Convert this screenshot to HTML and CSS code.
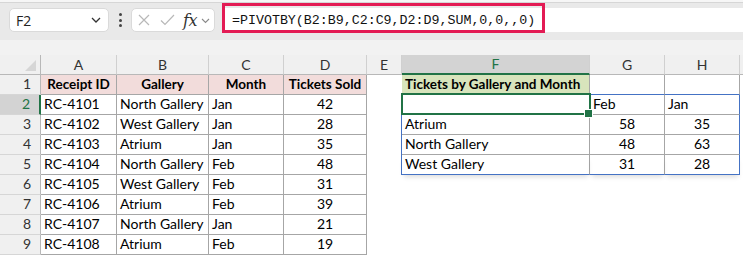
FILE: index.html
```html
<!doctype html>
<html>
  <head>
    <title>PIVOTBY - Tickets by Gallery</title>
    <link rel="stylesheet" href="styles.css">
  </head>
  <body>
    <div class="top-line"></div>

    <div class="formula-bar">
      <div class="name-box">
        <span class="name-text">F2</span>
        <svg class="chevron" width="10" height="6" viewBox="0 0 10 6">
          <polyline points="1,1 5,5 9,1" fill="none" stroke="#333" stroke-width="1.3" />
        </svg>
      </div>

      <div class="dots">
        <span></span>
        <span></span>
        <span></span>
      </div>

      <div class="fn-box">
        <svg width="12" height="12" viewBox="0 0 12 12">
          <path d="M1 1 L11 11 M11 1 L1 11" stroke="#b8b8b8" stroke-width="1.2" fill="none" />
        </svg>
        <svg class="check" width="15" height="12" viewBox="0 0 15 12">
          <polyline points="1,6.5 5,10.5 14,1" fill="none" stroke="#b8b8b8" stroke-width="1.2" />
        </svg>
        <span class="fx">fx</span>
        <svg class="fx-chevron" width="9" height="6" viewBox="0 0 9 6">
          <polyline points="1,1 4.5,4.5 8,1" fill="none" stroke="#8a8a8a" stroke-width="1.1" />
        </svg>
      </div>

      <div class="formula-input">
        <div class="formula-highlight"></div>
        <span class="formula-text">=PIVOTBY(B2:B9,C2:C9,D2:D9,SUM,0,0,,0)</span>
      </div>
    </div>

    <div class="band"></div>

    <table class="sheet">
      <colgroup>
        <col class="w-hdr">
        <col class="w-a">
        <col class="w-b">
        <col class="w-c">
        <col class="w-d">
        <col class="w-e">
        <col class="w-f">
        <col class="w-g">
        <col class="w-h">
        <col class="w-i">
      </colgroup>
      <tr class="col-headers">
        <th class="corner"><span class="corner-mark"></span></th>
        <th>A</th>
        <th>B</th>
        <th>C</th>
        <th>D</th>
        <th>E</th>
        <th class="active">F</th>
        <th>G</th>
        <th>H</th>
        <th class="last"></th>
      </tr>
      <tr>
        <td class="row-hdr">1</td>
        <td class="hd">Receipt ID</td>
        <td class="hd">Gallery</td>
        <td class="hd">Month</td>
        <td class="hd">Tickets Sold</td>
        <td class="e"></td>
        <td class="title">Tickets by Gallery and Month</td>
        <td class="pv-top-edge"></td>
        <td class="pv-top-edge"></td>
        <td></td>
      </tr>
      <tr>
        <td class="row-hdr active">2</td>
        <td class="dt">RC-4101</td>
        <td class="dt">North Gallery</td>
        <td class="dt">Jan</td>
        <td class="dt num">42</td>
        <td class="e pv-left"></td>
        <td class="pv selected"></td>
        <td class="pv">Feb</td>
        <td class="pv pv-right">Jan</td>
        <td></td>
      </tr>
      <tr>
        <td class="row-hdr">3</td>
        <td class="dt">RC-4102</td>
        <td class="dt">West Gallery</td>
        <td class="dt">Jan</td>
        <td class="dt num">28</td>
        <td class="e pv-left"></td>
        <td class="pv">Atrium</td>
        <td class="pv num">58</td>
        <td class="pv pv-right num">35</td>
        <td></td>
      </tr>
      <tr>
        <td class="row-hdr">4</td>
        <td class="dt">RC-4103</td>
        <td class="dt">Atrium</td>
        <td class="dt">Jan</td>
        <td class="dt num">35</td>
        <td class="e pv-left"></td>
        <td class="pv">North Gallery</td>
        <td class="pv num">48</td>
        <td class="pv pv-right num">63</td>
        <td></td>
      </tr>
      <tr>
        <td class="row-hdr">5</td>
        <td class="dt">RC-4104</td>
        <td class="dt">North Gallery</td>
        <td class="dt">Feb</td>
        <td class="dt num">48</td>
        <td class="e pv-left"></td>
        <td class="pv pv-bottom">West Gallery</td>
        <td class="pv pv-bottom num">31</td>
        <td class="pv pv-bottom pv-right num">28</td>
        <td></td>
      </tr>
      <tr>
        <td class="row-hdr">6</td>
        <td class="dt">RC-4105</td>
        <td class="dt">West Gallery</td>
        <td class="dt">Feb</td>
        <td class="dt num">31</td>
        <td class="e"></td>
        <td></td>
        <td></td>
        <td></td>
        <td></td>
      </tr>
      <tr>
        <td class="row-hdr">7</td>
        <td class="dt">RC-4106</td>
        <td class="dt">Atrium</td>
        <td class="dt">Feb</td>
        <td class="dt num">39</td>
        <td class="e"></td>
        <td></td>
        <td></td>
        <td></td>
        <td></td>
      </tr>
      <tr>
        <td class="row-hdr">8</td>
        <td class="dt">RC-4107</td>
        <td class="dt">North Gallery</td>
        <td class="dt">Jan</td>
        <td class="dt num">21</td>
        <td class="e"></td>
        <td></td>
        <td></td>
        <td></td>
        <td></td>
      </tr>
      <tr>
        <td class="row-hdr">9</td>
        <td class="dt">RC-4108</td>
        <td class="dt">Atrium</td>
        <td class="dt">Feb</td>
        <td class="dt num">19</td>
        <td class="e"></td>
        <td></td>
        <td></td>
        <td></td>
        <td></td>
      </tr>
    </table>
  </body>
</html>
```

FILE: styles.css
```css
* {
  box-sizing: border-box;
  margin: 0;
  padding: 0;
}

html,
body {
  height: 100%;
  overflow: hidden;
}

body {
  font-family: Lato, 'Liberation Sans', Arial, sans-serif;
  background: #fff;
  color: #000;
}

/* toolbar / formula bar */
.top-line {
  height: 3px;
  background: #f6f6f6;
  border-bottom: 1px solid #d6d6d6;
}

.formula-bar {
  height: 37px;
  background: #e9e9e9;
  display: flex;
  align-items: flex-start;
  padding-top: 5px;
}

.name-box {
  width: 100px;
  height: 24px;
  margin-left: 9px;
  background: #fff;
  border: 1px solid #dadada;
  border-radius: 5px;
  display: flex;
  align-items: center;
  justify-content: space-between;
  padding: 0 7px 0 6px;
}
.name-text {
  font-family: 'Open Sans', Lato, sans-serif;
  font-size: 14px;
  color: #222;
}

.dots {
  width: 22px;
  height: 24px;
  display: flex;
  flex-direction: column;
  align-items: center;
  justify-content: center;
  gap: 2.5px;
}
.dots span {
  width: 3px;
  height: 3px;
  border-radius: 50%;
  background: #444;
}

.fn-box {
  width: 84px;
  height: 24px;
  background: #fff;
  border: 1px solid #dadada;
  border-radius: 5px;
  display: flex;
  align-items: center;
  padding-left: 6px;
}
.check {
  margin-left: 10px;
}
.fx {
  font-family: 'DejaVu Serif', 'Liberation Serif', serif;
  font-style: italic;
  font-size: 16px;
  color: #333;
  margin-left: 8px;
  letter-spacing: -0.5px;
}
.fx-chevron {
  margin-left: 4px;
  margin-top: 2px;
}

.formula-input {
  flex: 1;
  height: 24px;
  margin-left: 7px;
  background: #fff;
  position: relative;
  display: flex;
  align-items: center;
  padding-left: 10px;
}
.formula-highlight {
  position: absolute;
  left: 0;
  top: -5px;
  width: 323px;
  height: 30px;
  border: 3px solid #e31b54;
}
.formula-text {
  font-family: 'Liberation Mono', 'DejaVu Sans Mono', monospace;
  font-size: 13.3px;
  color: #111;
  padding-top: 1px;
}

.band {
  height: 15px;
  background: #f2f2f2;
}

/* sheet grid */
.sheet {
  table-layout: fixed;
  border-collapse: separate;
  border-spacing: 0;
  width: 743px;
  background: #fff;
  font-size: 14px;
}
.w-hdr { width: 41px; }
.w-a { width: 76px; }
.w-b { width: 92px; }
.w-c { width: 75px; }
.w-d { width: 83px; }
.w-e { width: 35px; }
.w-f { width: 188px; }
.w-g { width: 75px; }
.w-h { width: 75px; }
.w-i { width: 3px; }

.sheet th,
.sheet td {
  height: 20px;
  padding: 0 0 1px 3px;
  white-space: nowrap;
  overflow: hidden;
  vertical-align: bottom;
  line-height: 18px;
  text-align: left;
}

.col-headers th {
  height: 20px;
  background: #f0f0f0;
  font-weight: normal;
  color: #333;
  text-align: center;
  padding: 0;
  border-right: 1px solid #d0d0d0;
  border-bottom: 1px solid #b8b8b8;
}
.col-headers th.active {
  background: #d3d3d3;
  color: #217346;
  border-bottom: 2px solid #217346;
}
.col-headers th.last {
  border-right: none;
}
.col-headers th.corner {
  position: relative;
  border-right: 1px solid #b8b8b8;
}
.corner-mark {
  position: absolute;
  right: 4px;
  bottom: 3px;
  width: 0;
  height: 0;
  border-left: 11px solid transparent;
  border-bottom: 11px solid #d6d6d6;
}

.row-hdr {
  background: #f0f0f0;
  color: #333;
  text-align: right !important;
  padding-right: 9px !important;
  border-right: 1px solid #b8b8b8;
  border-bottom: 1px solid #d6d6d6;
}
.row-hdr.active {
  background: #d3d3d3;
  color: #217346;
  border-right: 2px solid #217346;
}

/* source data */
.hd {
  background: #f2dcdb;
  font-weight: bold;
  font-size: 13.5px;
  text-align: center !important;
  padding-left: 0 !important;
  border-right: 1px solid #a6a6a6;
  border-bottom: 1px solid #a6a6a6;
}
.dt {
  border-right: 1px solid #a6a6a6;
  border-bottom: 1px solid #a6a6a6;
}
.num {
  text-align: center !important;
  padding-left: 0 !important;
}

/* pivot result */
.title {
  background: #d8e4bc;
  font-weight: bold;
  font-size: 13.5px;
  border-right: 1px solid #a6a6a6;
  border-bottom: 1px solid #4472c4;
}
.pv-top-edge {
  border-right: 1px solid #a6a6a6;
  border-bottom: 1px solid #4472c4;
}
.pv-left {
  border-right: 1px solid #4472c4;
}
.pv {
  border-right: 1px solid #a6a6a6;
  border-bottom: 1px solid #a6a6a6;
}
.pv.pv-right {
  border-right: 1px solid #4472c4;
}
.pv.pv-bottom {
  border-bottom: 1px solid #4472c4;
  box-shadow: 0 4px 5px -2px rgba(0, 0, 0, 0.14);
}

.sheet td.selected {
  position: relative;
  overflow: visible;
}
.sheet td.selected::after {
  content: '';
  position: absolute;
  left: -1px;
  top: -2px;
  right: -2px;
  bottom: -1px;
  border: 2px solid #217346;
}
.sheet td.selected::before {
  content: '';
  position: absolute;
  right: -4px;
  bottom: -4px;
  width: 7px;
  height: 7px;
  background: #217346;
  border: 1px solid #fff;
  z-index: 1;
}
```
